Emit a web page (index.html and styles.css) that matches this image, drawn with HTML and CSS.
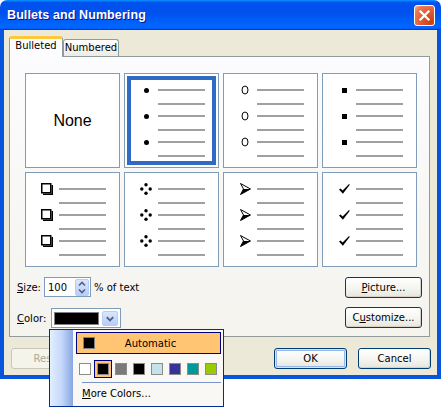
FILE: index.html
```html
<!DOCTYPE html>
<html lang="en">
<head>
    <meta charset="UTF-8">
    <title>Bullets and Numbering</title>
    <link rel="stylesheet" href="styles.css">
</head>
<body>
<div class="window">
    <div class="titlebar">
        <span class="title">Bullets and Numbering</span>
        <button class="close">
            <svg width="13" height="13" viewBox="0 0 13 13"><path d="M2.5 2.5 L10.5 10.5 M10.5 2.5 L2.5 10.5" stroke="#fff" stroke-width="2.2" stroke-linecap="square"/></svg>
        </button>
    </div>

    <div class="frame">
        <div class="tabs">
            <div class="tab active">Bulleted</div>
            <div class="tab">Numbered</div>
        </div>

        <div class="panel">
            <div class="gallery">
                <div class="cell none">None</div>

                <div class="cell selected">
                    <div class="item"><span class="mark"><i class="dot"></i></span><span class="lines"></span></div>
                    <div class="item"><span class="mark"><i class="dot"></i></span><span class="lines"></span></div>
                    <div class="item"><span class="mark"><i class="dot"></i></span><span class="lines"></span></div>
                </div>

                <div class="cell">
                    <div class="item"><span class="mark"><svg width="8" height="10" viewBox="0 0 8 10"><ellipse cx="4" cy="5" rx="3" ry="4" fill="none" stroke="#000" stroke-width="1"/></svg></span><span class="lines"></span></div>
                    <div class="item"><span class="mark"><svg width="8" height="10" viewBox="0 0 8 10"><ellipse cx="4" cy="5" rx="3" ry="4" fill="none" stroke="#000" stroke-width="1"/></svg></span><span class="lines"></span></div>
                    <div class="item"><span class="mark"><svg width="8" height="10" viewBox="0 0 8 10"><ellipse cx="4" cy="5" rx="3" ry="4" fill="none" stroke="#000" stroke-width="1"/></svg></span><span class="lines"></span></div>
                </div>

                <div class="cell">
                    <div class="item"><span class="mark"><i class="sq"></i></span><span class="lines"></span></div>
                    <div class="item"><span class="mark"><i class="sq"></i></span><span class="lines"></span></div>
                    <div class="item"><span class="mark"><i class="sq"></i></span><span class="lines"></span></div>
                </div>

                <div class="cell">
                    <div class="item"><span class="mark"><svg width="12" height="12" viewBox="0 0 12 12"><rect x="0.75" y="0.75" width="9" height="9" fill="#fff" stroke="#000" stroke-width="1.5"/><path d="M10.5 2 H12 V12 H2 V10.5 H10.5 Z" fill="#000"/></svg></span><span class="lines"></span></div>
                    <div class="item"><span class="mark"><svg width="12" height="12" viewBox="0 0 12 12"><rect x="0.75" y="0.75" width="9" height="9" fill="#fff" stroke="#000" stroke-width="1.5"/><path d="M10.5 2 H12 V12 H2 V10.5 H10.5 Z" fill="#000"/></svg></span><span class="lines"></span></div>
                    <div class="item"><span class="mark"><svg width="12" height="12" viewBox="0 0 12 12"><rect x="0.75" y="0.75" width="9" height="9" fill="#fff" stroke="#000" stroke-width="1.5"/><path d="M10.5 2 H12 V12 H2 V10.5 H10.5 Z" fill="#000"/></svg></span><span class="lines"></span></div>
                </div>

                <div class="cell">
                    <div class="item"><span class="mark"><svg width="12" height="12" viewBox="0 0 12 12"><g fill="#000"><circle cx="6" cy="1.8" r="1.7"/><circle cx="1.8" cy="6" r="1.7"/><circle cx="10.2" cy="6" r="1.7"/><circle cx="6" cy="10.2" r="1.7"/></g></svg></span><span class="lines"></span></div>
                    <div class="item"><span class="mark"><svg width="12" height="12" viewBox="0 0 12 12"><g fill="#000"><circle cx="6" cy="1.8" r="1.7"/><circle cx="1.8" cy="6" r="1.7"/><circle cx="10.2" cy="6" r="1.7"/><circle cx="6" cy="10.2" r="1.7"/></g></svg></span><span class="lines"></span></div>
                    <div class="item"><span class="mark"><svg width="12" height="12" viewBox="0 0 12 12"><g fill="#000"><circle cx="6" cy="1.8" r="1.7"/><circle cx="1.8" cy="6" r="1.7"/><circle cx="10.2" cy="6" r="1.7"/><circle cx="6" cy="10.2" r="1.7"/></g></svg></span><span class="lines"></span></div>
                </div>

                <div class="cell">
                    <div class="item"><span class="mark"><svg width="11" height="12" viewBox="0 0 11 12"><path d="M0.5 0.5 L10.5 6 L0.5 11.5 L3.5 6 Z" fill="#fff" stroke="#000" stroke-width="1" stroke-linejoin="miter"/><path d="M3.5 6 L10.5 6 L0.5 11.5 Z" fill="#000"/></svg></span><span class="lines"></span></div>
                    <div class="item"><span class="mark"><svg width="11" height="12" viewBox="0 0 11 12"><path d="M0.5 0.5 L10.5 6 L0.5 11.5 L3.5 6 Z" fill="#fff" stroke="#000" stroke-width="1" stroke-linejoin="miter"/><path d="M3.5 6 L10.5 6 L0.5 11.5 Z" fill="#000"/></svg></span><span class="lines"></span></div>
                    <div class="item"><span class="mark"><svg width="11" height="12" viewBox="0 0 11 12"><path d="M0.5 0.5 L10.5 6 L0.5 11.5 L3.5 6 Z" fill="#fff" stroke="#000" stroke-width="1" stroke-linejoin="miter"/><path d="M3.5 6 L10.5 6 L0.5 11.5 Z" fill="#000"/></svg></span><span class="lines"></span></div>
                </div>

                <div class="cell">
                    <div class="item"><span class="mark"><svg width="11" height="10" viewBox="0 0 11 10"><path d="M0 5.5 L1.6 4.4 L3.6 6.6 L10 0 L10.8 0.8 L3.9 9.8 Z" fill="#000"/></svg></span><span class="lines"></span></div>
                    <div class="item"><span class="mark"><svg width="11" height="10" viewBox="0 0 11 10"><path d="M0 5.5 L1.6 4.4 L3.6 6.6 L10 0 L10.8 0.8 L3.9 9.8 Z" fill="#000"/></svg></span><span class="lines"></span></div>
                    <div class="item"><span class="mark"><svg width="11" height="10" viewBox="0 0 11 10"><path d="M0 5.5 L1.6 4.4 L3.6 6.6 L10 0 L10.8 0.8 L3.9 9.8 Z" fill="#000"/></svg></span><span class="lines"></span></div>
                </div>
            </div>

            <div class="options">
                <div class="fields">
                    <div class="field">
                        <label class="lbl"><u>S</u>ize:</label>
                        <div class="spin">
                            <span class="spin-val">100</span>
                            <span class="spin-btn">
                                <svg width="12" height="15" viewBox="0 0 12 15"><path d="M3 5.5 L6 2.5 L9 5.5 M3 9.5 L6 12.5 L9 9.5" fill="none" stroke="#4D6185" stroke-width="1.6"/></svg>
                            </span>
                        </div>
                        <span class="unit">% of text</span>
                    </div>
                    <div class="field">
                        <label class="lbl"><u>C</u>olor:</label>
                        <div class="colorpick">
                            <span class="current"></span>
                            <span class="drop">
                                <svg width="15" height="15" viewBox="0 0 15 15"><path d="M4 6 L7.5 9.5 L11 6" fill="none" stroke="#4D6185" stroke-width="2"/></svg>
                            </span>
                        </div>
                    </div>
                </div>
                <div class="side-btns">
                    <button class="btn"><u>P</u>icture...</button>
                    <button class="btn">C<u>u</u>stomize...</button>
                </div>
            </div>
        </div>

        <div class="footer">
            <button class="btn foot" disabled>Reset</button>
            <button class="btn foot default">OK</button>
            <button class="btn foot">Cancel</button>
        </div>
    </div>
</div>

<!-- color dropdown, open over the dialog -->
<div class="popup">
    <div class="strip"></div>
    <div class="menu">
        <div class="auto"><span class="auto-sw"></span><span class="auto-txt">Automatic</span></div>
        <div class="swatches">
            <span class="slot"><i class="sw" style="background:#ffffff"></i></span>
            <span class="slot on"><i class="sw" style="background:#000000"></i></span>
            <span class="slot"><i class="sw" style="background:#7a7a7a"></i></span>
            <span class="slot"><i class="sw" style="background:#000000"></i></span>
            <span class="slot"><i class="sw" style="background:#c3e3e8"></i></span>
            <span class="slot"><i class="sw" style="background:#333399"></i></span>
            <span class="slot"><i class="sw" style="background:#009999"></i></span>
            <span class="slot"><i class="sw" style="background:#99cc00"></i></span>
        </div>
        <div class="sep"></div>
        <div class="more"><u>M</u>ore Colors...</div>
    </div>
</div>
</body>
</html>
```

FILE: styles.css
```css
* { box-sizing: border-box; }
body { margin: 0; background: #fff; font-family: "DejaVu Sans", Tahoma, sans-serif; font-size: 10px; color: #000; }

.window { width: 441px; height: 379px; display: flex; flex-direction: column; }
.titlebar {
    height: 30px; flex: none; display: flex; align-items: center; justify-content: space-between;
    padding: 0 6px 0 7px; border-radius: 7px 7px 0 0;
    background: linear-gradient(#0997ff, #0053ee 8%, #0050ee 40%, #0066ff 88%, #0066ff 93%, #005bff 95%, #003dd7 96%, #003dd7);
}
.title { color: #fff; font: bold 12.5px "Liberation Sans", Arial, sans-serif; text-shadow: 1px 1px #0f1089; letter-spacing: 0.1px; }
.close {
    width: 21px; height: 21px; padding: 0; display: flex; align-items: center; justify-content: center;
    border: 1px solid #fff; border-radius: 3px;
    background: radial-gradient(circle at 85% 85%, #c9400f 0%, #e05a30 45%, #eb7a55 80%, #f6b59e 100%);
}

.frame {
    flex: 1; display: flex; flex-direction: column; background: #ece9d8;
    border: solid #0855dd; border-width: 0 4px 4px; padding: 6px 6px 6px 5px;
    box-shadow: -1px 0 #0831d9, 1px 0 #00138c, 0 1px #00138c;
}

.tabs { display: flex; align-items: flex-end; height: 20px; position: relative; z-index: 1; }
.tab {
    width: 56px; height: 17px; text-align: center; line-height: 16px;
    border: 1px solid #919b9c; border-bottom: 0; border-radius: 3px 3px 0 0;
    background: linear-gradient(#fff, #ecebe6);
}
.tab.active {
    width: 54px; height: 21px; margin-bottom: -1px; line-height: 14px;
    border-top: 3px solid #ffc83c; background: #fcfcfe;
    box-shadow: inset 0 -1px #fcfcfe;
}

.panel {
    width: 421px; border: 1px solid #919b9c; padding: 16px 0 8px;
    background: linear-gradient(#fcfcfe, #f4f3ee);
}
.gallery { display: grid; grid-template-columns: repeat(4, 95px); grid-auto-rows: 95px; gap: 4px; margin-left: 15px; }
.cell { background: #fff; border: 1px solid #7f9db9; padding: 15px 0 0 11px; }
.cell.selected { box-shadow: inset 0 0 0 2px #fff, inset 0 0 0 6px #316ac5; }
.cell.none { display: flex; align-items: center; justify-content: center; padding: 0; font: 16px "Liberation Sans", Arial, sans-serif; }

.item { display: flex; align-items: flex-start; height: 26px; }
.mark { width: 20px; height: 2px; margin-right: 2px; display: flex; align-items: center; justify-content: center; }
.mark svg { flex: none; display: block; }
.lines { width: 47px; height: 16px; border-top: 2px solid #a0a0a0; border-bottom: 2px solid #a0a0a0; }
.dot { flex: none; width: 5px; height: 5px; border-radius: 50%; background: #000; }
.sq { flex: none; width: 5px; height: 5px; background: #000; }

.options { display: flex; justify-content: space-between; margin-top: 10px; padding: 0 7px 0 7px; }
.fields { display: flex; flex-direction: column; gap: 11px; }
.field { display: flex; align-items: center; height: 20px; }
.lbl { width: 27px; }
.field + .field .lbl { width: 34px; }
.spin {
    width: 47px; height: 20px; display: flex; align-items: center; justify-content: space-between;
    border: 1px solid #7f9db9; background: #fff; padding: 0 1px 0 3px;
}
.spin-btn, .drop {
    display: flex; align-items: center; justify-content: center; border-radius: 2px;
    border: 1px solid #b9ccf8; background: linear-gradient(#dbe6fe, #b9cdf7);
}
.spin-btn { width: 14px; height: 17px; }
.unit { margin-left: 3px; }
.colorpick {
    width: 70px; height: 20px; display: flex; align-items: center; gap: 3px;
    border: 1px solid #7f9db9; background: #fff; padding: 0 2px 0 2px;
}
.current { width: 47px; height: 13px; background: #000; border: 1px solid #808080; }
.drop { width: 16px; height: 15px; }

.side-btns { display: flex; flex-direction: column; gap: 9px; }
.btn {
    width: 77px; height: 21px; padding: 0; font: inherit; color: #000;
    border: 1px solid #003c74; border-radius: 3px;
    background: linear-gradient(#fff, #f3f3ef 60%, #e6e5dc);
    box-shadow: inset -1px -1px #d6d0c5;
}
.footer { display: flex; gap: 11px; margin-top: 11px; padding-left: 2px; }
.btn.foot { width: 73px; }
.btn.foot:first-child { margin-right: auto; }
.btn:disabled { color: #aca899; border-color: #c9c7ba; background: #f5f4ea; box-shadow: none; }
.btn.default { box-shadow: inset 0 0 0 1px #cee7ff, inset 0 0 0 2px #98b8ea; }

.popup {
    position: absolute; left: 49px; top: 329px; width: 175px; height: 78px;
    display: flex; border: 1px solid #002d96; background: #f9f8f4;
}
.strip { width: 23px; background: linear-gradient(90deg, #e3efff, #c5d8fb 50%, #87a6e1); }
.menu { flex: 1; padding: 2px 2px 0 3px; }
.auto {
    height: 22px; display: flex; align-items: center; padding-left: 6px;
    background: #ffc572; border: 1px solid #000080;
}
.auto-sw { width: 12px; height: 12px; background: #000; border: 1px solid #808080; }
.auto-txt { flex: 1; text-align: center; padding-right: 14px; }
.swatches { display: flex; margin-top: 6px; }
.slot { width: 18px; height: 18px; display: flex; align-items: center; justify-content: center; }
.slot.on { background: #ffc572; border: 1px solid #000080; }
.sw { width: 12px; height: 12px; border: 1px solid #8c8c8c; }
.sep { height: 1px; background: #7b95c9; margin: 4px 0 0 6px; }
.more { height: 22px; line-height: 22px; padding-left: 6px; }
```
